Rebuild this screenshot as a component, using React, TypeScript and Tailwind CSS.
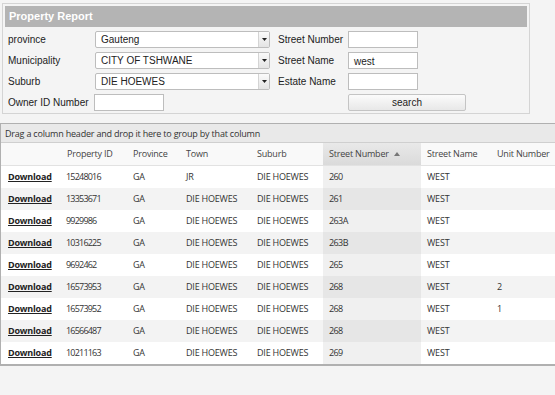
import React from "react";

const rows = [
  ["15248016", "GA", "JR", "DIE HOEWES", "260", "WEST", ""],
  ["13353671", "GA", "DIE HOEWES", "DIE HOEWES", "261", "WEST", ""],
  ["9929986", "GA", "DIE HOEWES", "DIE HOEWES", "263A", "WEST", ""],
  ["10316225", "GA", "DIE HOEWES", "DIE HOEWES", "263B", "WEST", ""],
  ["9692462", "GA", "DIE HOEWES", "DIE HOEWES", "265", "WEST", ""],
  ["16573953", "GA", "DIE HOEWES", "DIE HOEWES", "268", "WEST", "2"],
  ["16573952", "GA", "DIE HOEWES", "DIE HOEWES", "268", "WEST", "1"],
  ["16566487", "GA", "DIE HOEWES", "DIE HOEWES", "268", "WEST", ""],
  ["10211163", "GA", "DIE HOEWES", "DIE HOEWES", "269", "WEST", ""],
];

const cols = "grid grid-cols-[59px_66px_53px_71px_73px_98px_69px_1fr]";

function Select({ value }: { value: string }) {
  return (
    <div className="flex h-[17px] w-[175px] rounded-[2px] border border-[#bdbdbd] bg-white">
      <div className="flex-1 whitespace-nowrap pl-[5px] leading-[15px] text-[#222]">{value}</div>
      <div className="flex w-[11px] items-center justify-center border-l border-[#d4d4d4] bg-gradient-to-b from-[#fafafa] to-[#e4e4e4]">
        <svg width="5" height="3" viewBox="0 0 5 3"><path d="M0 0h5L2.5 3z" fill="#222" /></svg>
      </div>
    </div>
  );
}

function Input({ value = "" }: { value?: string }) {
  return (
    <div className="h-[17px] w-[70px] border border-[#bdbdbd] bg-white pl-[5px] pt-[1px] leading-[15px] text-[#222]">{value}</div>
  );
}

function Label({ children, w }: { children: React.ReactNode; w: string }) {
  return <span className={`${w} whitespace-nowrap text-[#222]`}>{children}</span>;
}

export default function App() {
  return (
    <div className="h-[395px] w-[555px] overflow-hidden bg-[#f4f4f4] text-[10px] text-[#333]" style={{ fontFamily: "'Liberation Sans', Arial, sans-serif" }}>
      <div className="pl-[2px] pt-[3px]">
        <div className="w-[528px] border border-[#d4d4d4] bg-[#f4f4f4] px-[2px] pb-[2px] pt-[2px]">
          <div className="h-[21px] bg-[#b4b4b4] pl-[4px] text-[11px] font-bold leading-[21px] text-white">Property Report</div>
          <div className="flex pt-[4px]">
            <div className="flex w-[272px] flex-col gap-[4px] pl-[3px]">
              <div className="flex h-[17px] items-center"><Label w="w-[87px]">province</Label><Select value="Gauteng" /></div>
              <div className="flex h-[17px] items-center"><Label w="w-[87px]">Municipality</Label><Select value="CITY OF TSHWANE" /></div>
              <div className="flex h-[17px] items-center"><Label w="w-[87px]">Suburb</Label><Select value="DIE HOEWES" /></div>
              <div className="flex h-[17px] items-center"><Label w="w-[86px]">Owner ID Number</Label><Input /></div>
            </div>
            <div className="flex flex-col gap-[4px] pl-[1px]">
              <div className="flex h-[17px] items-center"><Label w="w-[70px]">Street Number</Label><Input /></div>
              <div className="flex h-[17px] items-center"><Label w="w-[70px]">Street Name</Label><Input value="west" /></div>
              <div className="flex h-[17px] items-center"><Label w="w-[70px]">Estate Name</Label><Input /></div>
              <div className="flex h-[17px] items-center"><span className="w-[70px]"></span>
                <div className="h-[17px] w-[118px] rounded-[2px] border border-[#c4c4c4] bg-gradient-to-b from-[#fbfbfb] to-[#e8e8e8] text-center leading-[15px] text-[#222]">search</div>
              </div>
            </div>
          </div>
        </div>
      </div>

      <div className="mt-[9px] border-b-2 border-l border-t border-[#b0b0b0] bg-white tracking-[-0.2px]" style={{ fontFamily: "'Open Sans', 'Noto Sans', sans-serif" }}>
        <div className="h-[19px] whitespace-nowrap border-b border-[#cfcfcf] bg-[#e9e9e9] pl-[4px] text-[9px] leading-[19px] text-[#333]">Drag a column header and drop it here to group by that column</div>
        <div className={`${cols} h-[23px] whitespace-nowrap border-b border-[#e2e2e2] bg-[#f9f9f9] text-[9px] leading-[22px] text-[#444]`}>
          <div></div>
          <div className="pl-[7px]">Property ID</div>
          <div className="pl-[7px]">Province</div>
          <div className="pl-[7px]">Town</div>
          <div className="pl-[7px]">Suburb</div>
          <div className="flex items-center gap-[5px] bg-gradient-to-b from-[#e9e9e9] to-[#dadada] pl-[6px]">
            Street Number
            <svg width="6" height="4" viewBox="0 0 6 4"><path d="M0 4h6L3 0z" fill="#777" /></svg>
          </div>
          <div className="pl-[6px]">Street Name</div>
          <div className="pl-[7px]">Unit Number</div>
        </div>
        {rows.map((r, i) => {
          const alt = i % 2 === 1;
          return (
            <div key={i} className={`${cols} h-[22px] whitespace-nowrap text-[9px] leading-[22px] text-[#333] ${alt ? "bg-[#f3f3f3]" : "bg-white"}`}>
              <div className="pl-[7px] font-bold text-[#222] underline">Download</div>
              <div className="pl-[6px] tracking-[-0.8px]">{r[0]}</div>
              <div className="pl-[7px]">{r[1]}</div>
              <div className="pl-[7px]">{r[2]}</div>
              <div className="pl-[7px]">{r[3]}</div>
              <div className={`pl-[6px] tracking-[-0.6px] ${alt ? "bg-[#e6e6e6]" : "bg-[#f0f0f0]"}`}>{r[4]}</div>
              <div className="pl-[6px]">{r[5]}</div>
              <div className="pl-[7px]">{r[6]}</div>
            </div>
          );
        })}
      </div>
    </div>
  );
}
